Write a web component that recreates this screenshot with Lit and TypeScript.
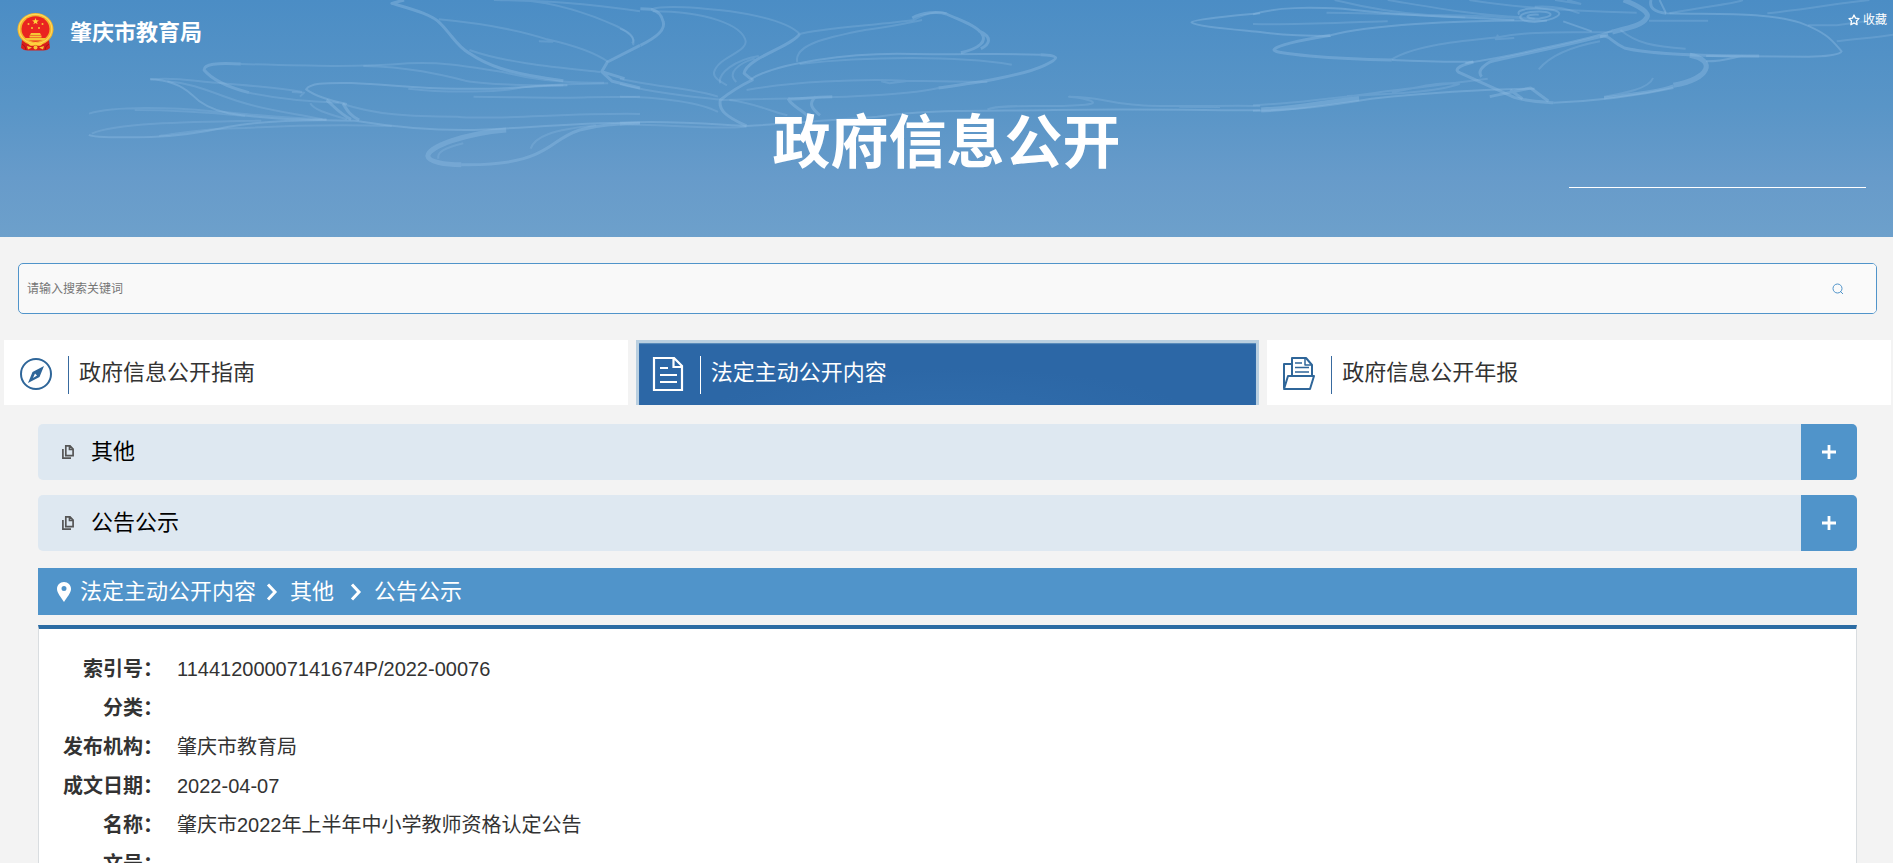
import { LitElement, html, css } from "lit";
import { customElement, property, state } from "lit/decorators.js";
import { classMap } from "lit/directives/class-map.js";

const emblem = html`
  <svg class="emblem" viewBox="0 0 37 38" aria-hidden="true">
    <path d="M5 27 L4 35 Q7 38 12 37.500 H25 Q30 38 33 35 L32 27 Z" fill="#d81e1c" />
    <path d="M5 31 Q9 33 9 37 M32 31 Q28 33 28 37" stroke="#a81314" stroke-width="1" fill="none" />
    <ellipse cx="18.500" cy="16.300" rx="18" ry="16.200" fill="#f3b52e" />
    <ellipse cx="18.500" cy="16" rx="16.300" ry="14.600" fill="none" stroke="#ffd95a" stroke-width="1.200" />
    <ellipse cx="18.500" cy="16" rx="14" ry="12.800" fill="#ea2420" />
    <path d="M18.500 5 l.9 2.300 2.500.1-2 1.500.7 2.400-2.100-1.400-2.100 1.400.7-2.400-2-1.500 2.500-.1z" fill="#ffd23c" />
    <g fill="#f6c536">
      <circle cx="11.500" cy="11" r="1" /><circle cx="25.500" cy="11" r="1" />
      <circle cx="15" cy="15" r="1" /><circle cx="22" cy="15" r="1" />
      <path d="M14 20 h9 l1 2 h-11z M12.500 22.500 h12 v2 h-12z M8 25 h21 l-2 2.500 h-17z" />
    </g>
    <path d="M10 29 q4 3 8.500 0 q4.500 3 8.500 0 l-3 3.500 q-3 1-5.500-1 q-2.500 2-5.500 1z" fill="#ffd23c" />
    <circle cx="18.500" cy="34.500" r="2" fill="#f6c536" />
    <path d="M10 33 l5 1.500 -4 2z M27 33 l-5 1.500 4 2z" fill="#f6c536" />
  </svg>`;

const flowers = html`
  <svg class="flowers" viewBox="0 0 1893 237" preserveAspectRatio="none" aria-hidden="true">
    <g transform="scale(.4082 .3333)">
      <path class="w2" d="M218 404 C225 412 300 413 370 411 C440 408 500 396 560 380 C650 360 750 358 870 362 C960 380 1060 390 1140 390 C1260 390 1380 366 1568 368" />
      <path class="w1" d="M218 341 C280 318 420 322 520 334 C600 340 680 355 800 358 M225 401 C280 370 440 366 640 362 M390 408 C440 400 500 384 600 384 C720 376 830 374 960 378 M330 330 C420 330 500 336 600 348" />
      <path class="w2" d="M368 238 C420 240 450 262 470 284 C490 310 520 330 560 340 C640 356 720 358 800 360" />
      <path class="w1" d="M368 238 C440 230 480 246 530 248 C600 256 680 262 740 276 M410 244 C480 250 530 284 590 306 C650 330 720 340 790 358" />
      <path class="w3" d="M590 192 C530 188 500 192 500 210 C520 240 560 262 610 278" />
      <path class="w1" d="M590 192 C760 198 880 202 1000 190 C1100 184 1170 206 1240 218 C1320 244 1400 250 1480 248 M610 278 C680 296 740 304 830 308" />
      <path class="w1" d="M890 198 C1000 200 1080 224 1140 242 C1190 254 1290 256 1380 256" />
      <path class="w2" d="M850 312 C800 300 770 286 750 268 C760 250 790 248 860 249 C960 254 1020 266 1120 266 C1220 270 1300 258 1390 256" />
      <path class="w1" d="M1000 266 C1100 280 1230 276 1280 262 C1360 250 1420 252 1490 250 M840 312 C920 344 1000 350 1120 350 C1200 362 1400 338 1568 342" />
      <path class="w3" d="M800 300 C820 320 830 340 860 358 M840 310 C850 330 856 345 880 360" />
      <path class="w1" d="M760 310 C770 330 800 340 850 358 M715 276 L745 278 L735 290" />
      <path class="w3" d="M990 0 L960 10 C1010 28 1060 44 1080 72 C1110 110 1120 140 1150 160 C1190 194 1240 220 1380 242" />
      <path class="w1" d="M1075 58 C1180 70 1270 90 1340 118 C1420 140 1460 160 1490 186 M1150 150 C1240 190 1380 204 1470 216 M1210 0 C1330 2 1430 8 1568 34 M1280 0 C1380 12 1460 50 1510 78 C1540 96 1560 118 1548 130 M1320 124 L1355 125" />
      <path class="w3" d="M1568 136 L1488 186 L1474 215 L1500 244 L1568 264 M1474 215 L1530 236" />
      <path class="w1" d="M1160 290 C1300 292 1380 296 1440 292 L1568 290" />
      <path class="w4" d="M1240 390 C1140 400 1050 440 1048 468 C1050 486 1090 494 1130 494" />
      <path class="w3" d="M1130 494 C1220 496 1280 480 1310 464 C1360 438 1370 410 1420 390 C1470 374 1520 370 1568 370" />
      <path class="w1" d="M1300 446 C1310 410 1350 390 1460 376 M1074 476 C1070 456 1090 444 1135 430" />
    </g>
    <g transform="translate(620 0) scale(.4082 .3333)">
      <path class="w3" d="M50 136 C90 112 112 90 106 66 C102 44 92 32 76 28 L50 26" />
      <path class="w1" d="M76 28 C110 14 200 24 270 34 C370 52 420 76 440 102 M80 34 C210 34 300 74 308 124 C308 160 240 170 230 218 C230 236 248 246 262 256 M0 86 C24 96 38 110 32 136" />
      <path class="w3" d="M440 102 C420 140 310 174 304 220 L324 240 C290 260 270 276 246 300 C240 330 260 350 310 378" />
      <path class="w1" d="M440 102 C480 86 640 74 720 60 C760 30 790 36 800 40" />
      <path class="w3" d="M716 54 C740 36 780 34 800 42 C830 60 870 74 886 100 C900 124 880 146 835 158 M878 92 C916 112 904 134 884 146" />
      <path class="w1" d="M434 186 C426 130 520 110 600 90 C680 78 700 70 740 60" />
      <path class="w2" d="M320 238 C380 190 560 156 720 162 C880 164 940 160 1030 164" />
      <path class="w3" d="M1030 164 C1080 166 1076 176 1040 196 C980 230 860 250 780 264" />
      <path class="w1" d="M780 264 C680 294 360 296 250 300" />
      <path class="w1" d="M440 192 C600 170 820 166 960 194 M310 270 C420 246 580 236 700 242 L900 246 M640 244 L660 250 L700 244 M0 252 C80 280 180 290 250 300 M0 236 C80 260 180 264 240 290 M0 290 C100 290 200 310 240 336" />
      <path class="w2" d="M0 368 C120 360 220 372 310 378 C420 370 520 360 630 350 C760 326 930 334 1060 330 C1240 326 1400 330 1568 331" />
      <path class="w1" d="M0 374 C120 372 220 390 310 380 M900 328 C940 310 1060 324 1140 314 C1180 310 1150 296 1100 290 C1180 290 1180 308 1260 314 C1350 324 1480 314 1568 318 M1370 320 L1470 321" />
      <path class="w3" d="M412 296 C420 320 450 330 460 350 M480 290 C460 310 470 326 490 346 M412 296 C440 300 460 290 520 290" />
      <path class="w1" d="M268 300 C320 306 360 330 410 346 M245 250 C240 220 280 180 340 168 M285 246 C260 220 290 190 330 176" />
      <path class="w2" d="M1568 40 C1500 46 1400 60 1400 67 C1410 80 1500 88 1568 96" />
    </g>
    <g transform="translate(1253 0) scale(.4082 .3333)">
      <path class="w2" d="M0 43 C60 20 140 22 220 26 C380 50 520 50 640 60 M17 96 C60 104 120 108 190 108" />
      <path class="w1" d="M0 72 C100 76 240 66 330 64 M200 0 C280 24 360 40 430 45 C520 44 600 52 690 56 M330 0 C430 20 540 46 660 52 M530 0 C640 22 760 34 940 38 M180 38 C300 38 400 46 520 52" />
      <path class="w3" d="M340 180 C200 176 40 162 52 148 C60 136 120 120 190 106" />
      <path class="w2" d="M540 185 C470 186 410 184 340 180 M190 106 C280 76 480 60 720 62" />
      <path class="w1" d="M340 178 C400 136 500 124 600 112 C690 90 780 100 880 96 M600 104 L595 118 L640 114" />
      <path class="w2" d="M652 44 C640 24 700 22 735 30 C770 40 740 60 690 66 C650 64 640 44 680 36 C730 30 750 48 700 56 C660 56 666 42 700 44" />
      <path class="w1" d="M690 20 C740 16 780 30 800 40 M740 0 L804 12 M770 0 L804 12" />
      <path class="w4" d="M908 0 C950 20 974 40 964 54 C954 76 920 84 880 96" />
      <path class="w2" d="M760 64 L830 94 M880 92 C840 112 750 134 690 150 C620 170 560 182 520 190" />
      <path class="w3" d="M870 104 C760 140 630 170 580 186 C560 200 550 216 560 230 M540 186 C500 198 490 212 510 220 C560 248 590 264 640 292 C680 306 710 306 736 308" />
      <path class="w2" d="M736 308 C860 302 970 280 1030 264" />
      <path class="w4" d="M1030 256 C1120 236 1136 180 1070 166" />
      <path class="w3" d="M1030 258 C1000 274 920 284 860 294 M850 110 C876 104 874 124 910 144 C970 162 1120 168 1240 168" />
      <path class="w1" d="M850 124 C780 140 730 164 700 208 M980 234 C970 266 910 280 860 290" />
      <path class="w3" d="M975 0 C970 24 984 36 1012 40" />
      <path class="w2" d="M996 0 L1012 40 C1140 44 1260 36 1340 68 C1410 100 1420 124 1442 154 C1440 164 1400 170 1360 170 L1110 168 M1110 184 C1160 184 1180 170 1200 168" />
      <path class="w1" d="M1020 40 C1120 16 1180 12 1200 0 M1260 40 C1360 28 1430 10 1510 0 M970 62 L1115 62 M900 90 C940 130 980 140 1060 146 M1360 76 L1430 76 L1500 64 M1430 124 C1480 116 1530 112 1568 104" />
      <path class="w3" d="M580 290 L680 264 L724 304 M630 270 L660 296" />
      <path class="w2" d="M0 332 C100 332 190 316 290 296 C420 280 560 268 690 266" />
      <path class="w4" d="M20 330 C110 326 170 306 260 296" />
      <path class="w1" d="M0 316 C160 306 300 276 410 262 L575 236 M230 288 C340 282 450 276 505 252 C460 242 400 264 340 276" />
    </g>
  </svg>`;

const icons = {
  compass: html`<svg class="tab-icon" viewBox="0 0 32 34" aria-hidden="true">
    <circle cx="16" cy="17" r="15" fill="none" stroke="currentColor" stroke-width="2" />
    <path fill-rule="evenodd" fill="currentColor" d="M24 9 L19.500 20 L8 26 L12.500 15Z M15 16.500 L13 21 L17 18.500Z" />
  </svg>`,
  document: html`<svg class="tab-icon" viewBox="0 0 32 34" aria-hidden="true">
    <g fill="none" stroke="currentColor" stroke-width="2.200"><path d="M2 1 H22 L30 9 V33 H2Z M21.500 1 V10 H30" />
    <path d="M8 11 H16 M8 18 H25 M8 25 H25" /></g>
  </svg>`,
  folder: html`<svg class="tab-icon" viewBox="0 0 32 34" aria-hidden="true">
    <g fill="none" stroke="currentColor" stroke-width="2" stroke-linejoin="round">
    <path d="M1 32 L5 19 H31 L27 32Z M1 31 V7 H8 M9 18 V1 H23 L29 8 V18" />
    <path stroke-width="1.500" d="M22 1 V8 H29 M12 6 H19 M12 10.500 H26 M12 15 H26" /></g>
  </svg>`,
};

const copyIcon = html`<svg class="copy" viewBox="0 0 12 14" aria-hidden="true">
  <g fill="none" stroke="currentColor" stroke-width="1.700"><path d="M3.800 .9 H8 L11.100 4 V10.600 H3.800Z M7.500 1 V4.500 H11 M.9 4 V13.100 H9" /></g>
</svg>`;

const chevron = html`<svg class="chevron" viewBox="0 0 12 18" aria-hidden="true">
  <path d="M2 1.500 L9 9 L2 16.500" fill="none" stroke="currentColor" stroke-width="3" />
</svg>`;

@customElement("accordion-row")
export class AccordionRow extends LitElement {
  @property() label = "";
  @state() private open = false;

  static styles = css`
    :host { display: block; }
    .row {
      display: flex;
      align-items: stretch;
      height: 56px;
      border-radius: 5px;
      overflow: hidden;
      background: #dee8f1;
    }
    .name {
      flex: 1;
      display: flex;
      align-items: center;
      gap: 17px;
      margin: 0;
      padding-left: 24px;
      color: #000;
      font-size: 22px;
      font-weight: 400;
      line-height: 32px;
    }
    .copy { width: 12px; height: 14px; color: #555; }
    .toggle {
      display: grid;
      place-items: center;
      width: 56px;
      padding: 0;
      border: 0;
      background: #5094ca;
      color: #fff;
      cursor: pointer;
    }
    .plus { width: 14px; height: 14px; }
  `;

  render() {
    return html`<div class="row">
      <h2 class="name">${copyIcon}<span>${this.label}</span></h2>
      <button class="toggle" type="button" aria-label="展开${this.label}" aria-expanded=${this.open}
        @click=${() => (this.open = !this.open)}>
        <svg class="plus" viewBox="0 0 14 14" aria-hidden="true">
          <path d=${this.open ? "M0 7 H14" : "M0 7 H14 M7 0 V14"} stroke="currentColor" stroke-width="2.800" />
        </svg>
      </button>
    </div>`;
  }
}

@customElement("app-root")
export class AppRoot extends LitElement {
  private tabs = [
    { label: "政府信息公开指南", icon: icons.compass, active: false },
    { label: "法定主动公开内容", icon: icons.document, active: true },
    { label: "政府信息公开年报", icon: icons.folder, active: false },
  ];

  private facts = [
    ["索引号", "11441200007141674P/2022-00076"],
    ["分类", ""],
    ["发布机构", "肇庆市教育局"],
    ["成文日期", "2022-04-07"],
    ["名称", "肇庆市2022年上半年中小学教师资格认定公告"],
    ["文号", ""],
  ];

  static styles = css`
    :host {
      display: block;
      min-height: 100vh;
      background: #f3f3f3;
      color: #333;
      font-family: "Liberation Sans", "Noto Sans CJK SC", sans-serif;
    }
    a { color: inherit; text-decoration: none; }
    .banner {
      position: relative;
      box-sizing: border-box;
      height: 237px;
      background: linear-gradient(#4b8dc5, #5995c7 45%, #679bca 75%, #6da0cb);
      color: #fff;
    }
    .flowers { position: absolute; inset: 0; width: 100%; height: 100%; }
    .flowers path {
      fill: none;
      stroke: #8ab8e0;
      stroke-opacity: 0.45;
      stroke-linejoin: round;
      vector-effect: non-scaling-stroke;
    }
    .flowers .w1 { stroke-width: 2px; stroke-opacity: 0.32; }
    .flowers .w2 { stroke-width: 2px; }
    .flowers .w3 { stroke-width: 3px; }
    .flowers .w4 { stroke-width: 5px; }
    .banner-body { position: relative; display: flex; flex-direction: column; }
    .topbar {
      display: flex;
      justify-content: space-between;
      align-items: flex-start;
      padding: 13px 6px 0 17px;
    }
    .brand { display: flex; align-items: flex-start; gap: 16px; font-size: 22px; line-height: 40px; font-weight: 700; }
    .emblem { width: 37px; height: 38px; }
    .favorite { display: flex; align-items: center; gap: 3px; font-size: 12px; line-height: 14px; }
    .star { width: 12px; height: 12px; }
    .title { margin: 48px 0 0; text-align: center; font-size: 58px; line-height: 84px; font-weight: 700; }
    .rule { align-self: flex-end; width: 297px; height: 1px; margin: 2px 27px 0 0; background: #fff; }
    .search {
      display: flex;
      height: 49px;
      margin: 26px 16px 26px 18px;
      border: 1px solid #5094ca;
      border-radius: 5px;
      overflow: hidden;
      background: #f9f9f9;
    }
    .query {
      flex: 1;
      min-width: 0;
      padding: 1px 8px 0;
      border: 0;
      outline: 0;
      background: transparent;
      color: #333;
      font: 12px "Liberation Sans", "Noto Sans CJK SC", sans-serif;
    }
    .query::placeholder { color: #757575; opacity: 1; }
    .go {
      display: grid;
      place-items: center;
      width: 76px;
      padding: 0;
      border: 0;
      background: #fafafa;
      color: #5094ca;
      cursor: pointer;
    }
    .lens { width: 12px; height: 12px; }
    .tabs { display: grid; grid-template-columns: repeat(3, 1fr); gap: 8px; padding: 0 2px 0 4px; }
    .tab {
      display: flex;
      align-items: center;
      box-sizing: border-box;
      height: 65px;
      padding: 2px 0 0 16px;
      background: #fff;
      font-size: 22px;
    }
    .tab-icon { width: 32px; height: 34px; color: #2f6699; }
    .tab-label {
      margin: 3px 0 0 16px;
      padding: 0 0 4px 10px;
      border-left: 1px solid #386a9f;
      line-height: 34px;
    }
    .tab.active {
      padding: 0 0 1px 13px;
      border: 3px solid #b9cfe0;
      border-bottom: 0;
      background: radial-gradient(ellipse 40% 80% at 50% 120%, #306dac, #2c67a6);
      color: #fff;
      box-shadow: inset 0 1px 1px #5f8fbd;
    }
    .tab.active .tab-icon { color: #fff; }
    .tab.active .tab-label { border-color: #fff; }
    .content { padding: 19px 36px 0 38px; }
    .groups { display: flex; flex-direction: column; gap: 15px; }
    .crumbs {
      display: flex;
      align-items: center;
      height: 47px;
      margin: 17px 0 10px;
      padding-left: 18px;
      background: #5094ca;
      color: #fff;
      font-size: 22px;
      line-height: 32px;
    }
    .pin { width: 16px; height: 20px; margin-right: 8px; }
    .chevron { width: 12px; height: 18px; margin: 0 12px 0 10px; }
    .crumb-sub { padding-right: 6px; }
    .facts {
      display: grid;
      grid-template-columns: auto 1fr;
      column-gap: 14px;
      margin: 0;
      padding: 21px 24px;
      border: 1px solid #d9dde0;
      border-top: 4px solid #2b6ca4;
      background: #fff;
      font-size: 20px;
      line-height: 39px;
    }
    .term { text-align: right; font-weight: 700; white-space: nowrap; }
    .value { margin: 0; }
  `;

  render() {
    return html`
      <header class="banner">
        ${flowers}
        <div class="banner-body">
          <div class="topbar">
            <a class="brand" href="#">${emblem}<span>肇庆市教育局</span></a>
            <a class="favorite" href="#">
              <svg class="star" viewBox="0 0 12 12" aria-hidden="true">
                <path d="M6 1 L7.500 4.100 L11 4.600 L8.500 7 L9.100 10.700 L6 9 L2.900 10.700 L3.500 7 L1 4.600 L4.500 4.100Z" fill="none" stroke="currentColor" stroke-width="1.300" stroke-linejoin="round" />
              </svg><span>收藏</span>
            </a>
          </div>
          <h1 class="title">政府信息公开</h1>
          <div class="rule"></div>
        </div>
      </header>
      <form class="search" role="search" @submit=${(e: Event) => e.preventDefault()}>
        <input class="query" type="text" placeholder="请输入搜索关键词" aria-label="请输入搜索关键词" />
        <button class="go" type="submit" aria-label="搜索">
          <svg class="lens" viewBox="0 0 12 12" aria-hidden="true">
            <g fill="none" stroke="currentColor" stroke-width="1"><circle cx="5.500" cy="5.500" r="4.500" /><path d="M8 8 L11 11" /></g>
          </svg>
        </button>
      </form>
      <nav class="tabs">
        ${this.tabs.map((t) => html`<a href="#" class=${classMap({ tab: true, active: t.active })}>${t.icon}<span class="tab-label">${t.label}</span></a>`)}
      </nav>
      <main class="content">
        <div class="groups">
          <accordion-row label="其他"></accordion-row>
          <accordion-row label="公告公示"></accordion-row>
        </div>
        <nav class="crumbs">
          <svg class="pin" viewBox="0 0 16 20" aria-hidden="true">
            <path fill="currentColor" fill-rule="evenodd" d="M8 0 C12 0 15 3 15 7 C15 11 11 15 8 20 C5 15 1 11 1 7 C1 3 4 0 8 0Z M8 4 A2.500 2.500 0 1 0 8 9 A2.500 2.500 0 1 0 8 4Z" />
          </svg>
          <a href="#">法定主动公开内容</a>${chevron}<a class="crumb-sub" href="#">其他</a>${chevron}<a href="#">公告公示</a>
        </nav>
        <dl class="facts">
          ${this.facts.map(([k, v]) => html`<dt class="term">${k}：</dt><dd class="value">${v}</dd>`)}
        </dl>
      </main>
    `;
  }
}
